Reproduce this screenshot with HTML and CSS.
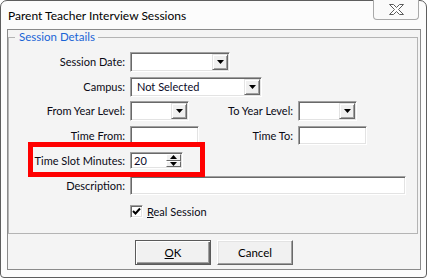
FILE: index.html
```html
<!DOCTYPE html>
<html>
<head>
<meta charset="utf-8">
<link rel="stylesheet" href="styles.css">
</head>
<body>
<div class="window">
  <div class="titlebar">
    <span class="title">Parent Teacher Interview Sessions</span>
    <div class="close">
      <svg width="15" height="11" viewBox="0 0 15 11"><polygon points="0.5,0.5 4.5,0.5 7.5,3.5 10.5,0.5 14.5,0.5 9.5,5.5 14.5,10.5 10.5,10.5 7.5,7.5 4.5,10.5 0.5,10.5 5.5,5.5" fill="#fff" stroke="#5c5c5c" stroke-width="1"/></svg>
    </div>
  </div>
  <div class="client">
    <div class="group">
      <span class="legend">Session Details</span>
      <div class="form">
        <span class="lbl">Session Date:</span>
        <div class="combo w-date"><span class="val"></span><span class="dd"><svg width="7" height="4" viewBox="0 0 7 4"><polygon points="0,0 7,0 3.5,4" fill="#000"/></svg></span></div>

        <span class="lbl">Campus:</span>
        <div class="combo w-campus"><span class="val">Not Selected</span><span class="dd"><svg width="7" height="4" viewBox="0 0 7 4"><polygon points="0,0 7,0 3.5,4" fill="#000"/></svg></span></div>

        <span class="lbl">From Year Level:</span>
        <div class="combo w-year"><span class="val"></span><span class="dd"><svg width="7" height="4" viewBox="0 0 7 4"><polygon points="0,0 7,0 3.5,4" fill="#000"/></svg></span></div>
        <span class="lbl lbl2">To Year Level:</span>
        <div class="combo w-year col4"><span class="val"></span><span class="dd"><svg width="7" height="4" viewBox="0 0 7 4"><polygon points="0,0 7,0 3.5,4" fill="#000"/></svg></span></div>

        <span class="lbl lbl-tb">Time From:</span>
        <div class="textbox w-time"></div>
        <span class="lbl lbl2 lbl-tb">Time To:</span>
        <div class="textbox w-time col4"></div>

        <span class="lbl lbl-spin">Time Slot Minutes:</span>
        <div class="spin"><span class="val">20</span><span class="spinbtns"><span class="sb"><svg width="7" height="4" viewBox="0 0 7 4"><polygon points="0,4 7,4 3.5,0" fill="#000"/></svg></span><span class="sb"><svg width="7" height="4" viewBox="0 0 7 4"><polygon points="0,0 7,0 3.5,4" fill="#000"/></svg></span></span></div>

        <span class="lbl lbl-tb">Description:</span>
        <div class="textbox w-desc"></div>

        <div class="check-row">
          <span class="checkbox"><svg width="9" height="9" viewBox="0 0 9 9"><polyline points="1,4 3.5,6.5 8,1.5" fill="none" stroke="#000" stroke-width="2"/></svg></span>
          <span class="check-text"><u>R</u>eal Session</span>
        </div>
      </div>
      <div class="highlight"></div>
    </div>
    <div class="footer">
      <button class="btn default"><u>O</u>K</button>
      <button class="btn">Cancel</button>
    </div>
  </div>
</div>
</body>
</html>
```
FILE: styles.css
```css
* {
  box-sizing: border-box;
}

html, body {
  margin: 0;
  padding: 0;
  background: #fff;
}

body {
  width: 427px;
  height: 278px;
  overflow: hidden;
  font-family: Lato, "Liberation Sans", sans-serif;
  font-size: 11px;
  color: #0a0a14;
}

.window {
  width: 427px;
  height: 278px;
  border: 1px solid #5e5e5e;
  border-radius: 7px 7px 4px 4px;
  background: #fcfcfc;
  display: flex;
  flex-direction: column;
}

.titlebar {
  height: 28px;
  display: flex;
  align-items: center;
}

.title {
  padding-left: 7px;
  font-size: 12px;
  color: #000;
}

.close {
  align-self: flex-start;
  margin: -1px 7px 0 auto;
  width: 46px;
  height: 20px;
  border: 1px solid #a9a9a9;
  border-top: 0;
  border-radius: 0 0 4px 4px;
  background: #fafafa;
  display: flex;
  align-items: center;
  justify-content: center;
}

.close svg {
  display: block;
}

.client {
  flex: 1;
  margin: 0 5px 7px 6px;
  border: 1px solid #8a8a8a;
  background: #f4f4f4;
  display: flex;
  flex-direction: column;
}

.group {
  position: relative;
  margin: 7px 2px 0 0;
  height: 197px;
  border: 1px solid #b4b4b4;
  padding-top: 14px;
}

.legend {
  position: absolute;
  top: -8px;
  left: 6px;
  padding: 0 3px 0 4px;
  line-height: 14px;
  background: #f4f4f4;
  color: #1a64d6;
  font-size: 11.5px;
}

.form {
  display: grid;
  grid-template-columns: 116px 70px 88px 107px;
  grid-template-rows: 25px 24px 25px 26px 24px 29px 20px;
  column-gap: 5px;
  align-items: start;
}

.lbl {
  grid-column: 1;
  text-align: right;
  line-height: 20px;
  white-space: nowrap;
}

.lbl-tb {
  line-height: 19px;
}

.lbl-spin {
  line-height: 17px;
}

.lbl2 {
  grid-column: 3;
}

.col4 {
  grid-column: 4;
}

.combo,
.textbox,
.spin {
  background: #fff;
  border: 1px solid;
  border-color: #a0a0a0 #fff #fff #a0a0a0;
  box-shadow: inset 1px 1px 0 #696969, inset -1px -1px 0 #e3e3e3;
}

.combo {
  height: 20px;
  display: flex;
  align-items: stretch;
  justify-content: space-between;
  padding: 1px;
  justify-self: start;
}

.combo .val {
  padding-left: 5px;
  line-height: 16px;
  color: #0a0a28;
}

.dd {
  width: 16px;
  background: #f0f0f0;
  border: 1px solid;
  border-color: #e3e3e3 #696969 #696969 #e3e3e3;
  box-shadow: inset 1px 1px 0 #fff, inset -1px -1px 0 #a0a0a0;
  display: flex;
  align-items: center;
  justify-content: center;
}

.dd svg,
.sb svg,
.checkbox svg {
  display: block;
}

.w-date {
  grid-column: 2 / 5;
  width: 100px;
}

.w-campus {
  grid-column: 2 / 5;
  width: 132px;
}

.w-year {
  width: 59px;
}

.textbox {
  height: 19px;
  justify-self: start;
}

.w-time {
  width: 69px;
}

.w-desc {
  grid-column: 2 / 5;
  width: 276px;
}

.spin {
  grid-column: 2;
  width: 53px;
  height: 17px;
  display: flex;
  justify-content: space-between;
  padding: 1px;
}

.spin .val {
  padding-left: 2px;
  line-height: 13px;
  color: #0a0a28;
}

.spinbtns {
  display: flex;
  flex-direction: column;
  width: 15px;
}

.sb {
  flex: 1;
  background: #f0f0f0;
  border: 1px solid;
  border-color: #fff #696969 #696969 #fff;
  display: flex;
  align-items: center;
  justify-content: center;
}

.check-row {
  grid-column: 2 / 5;
  display: flex;
  align-items: center;
  gap: 4px;
  height: 13px;
}

.checkbox {
  width: 13px;
  height: 13px;
  background: #fff;
  border: 1px solid;
  border-color: #a0a0a0 #fff #fff #a0a0a0;
  box-shadow: inset 1px 1px 0 #696969, inset -1px -1px 0 #e3e3e3;
  display: flex;
  align-items: center;
  justify-content: center;
}

.check-text {
  white-space: nowrap;
}

.highlight {
  position: absolute;
  left: 19px;
  top: 104px;
  width: 177px;
  height: 35px;
  border: 5px solid #f00;
  pointer-events: none;
}

.footer {
  display: flex;
  justify-content: center;
  gap: 6px;
  padding-top: 6px;
}

.btn {
  width: 76px;
  height: 25px;
  margin: 0;
  padding: 0;
  font-family: inherit;
  font-size: 11.5px;
  color: #000;
  background: #f1f1f1;
  border: 1px solid;
  border-color: #fff #696969 #696969 #fff;
  box-shadow: inset -1px -1px 0 #a0a0a0, inset 1px 1px 0 #e3e3e3;
}

.btn.default {
  border-color: #5a5a5a;
  box-shadow: inset 1px 1px 0 #fff, inset -1px -1px 0 #696969, inset -2px -2px 0 #a0a0a0;
}
```
